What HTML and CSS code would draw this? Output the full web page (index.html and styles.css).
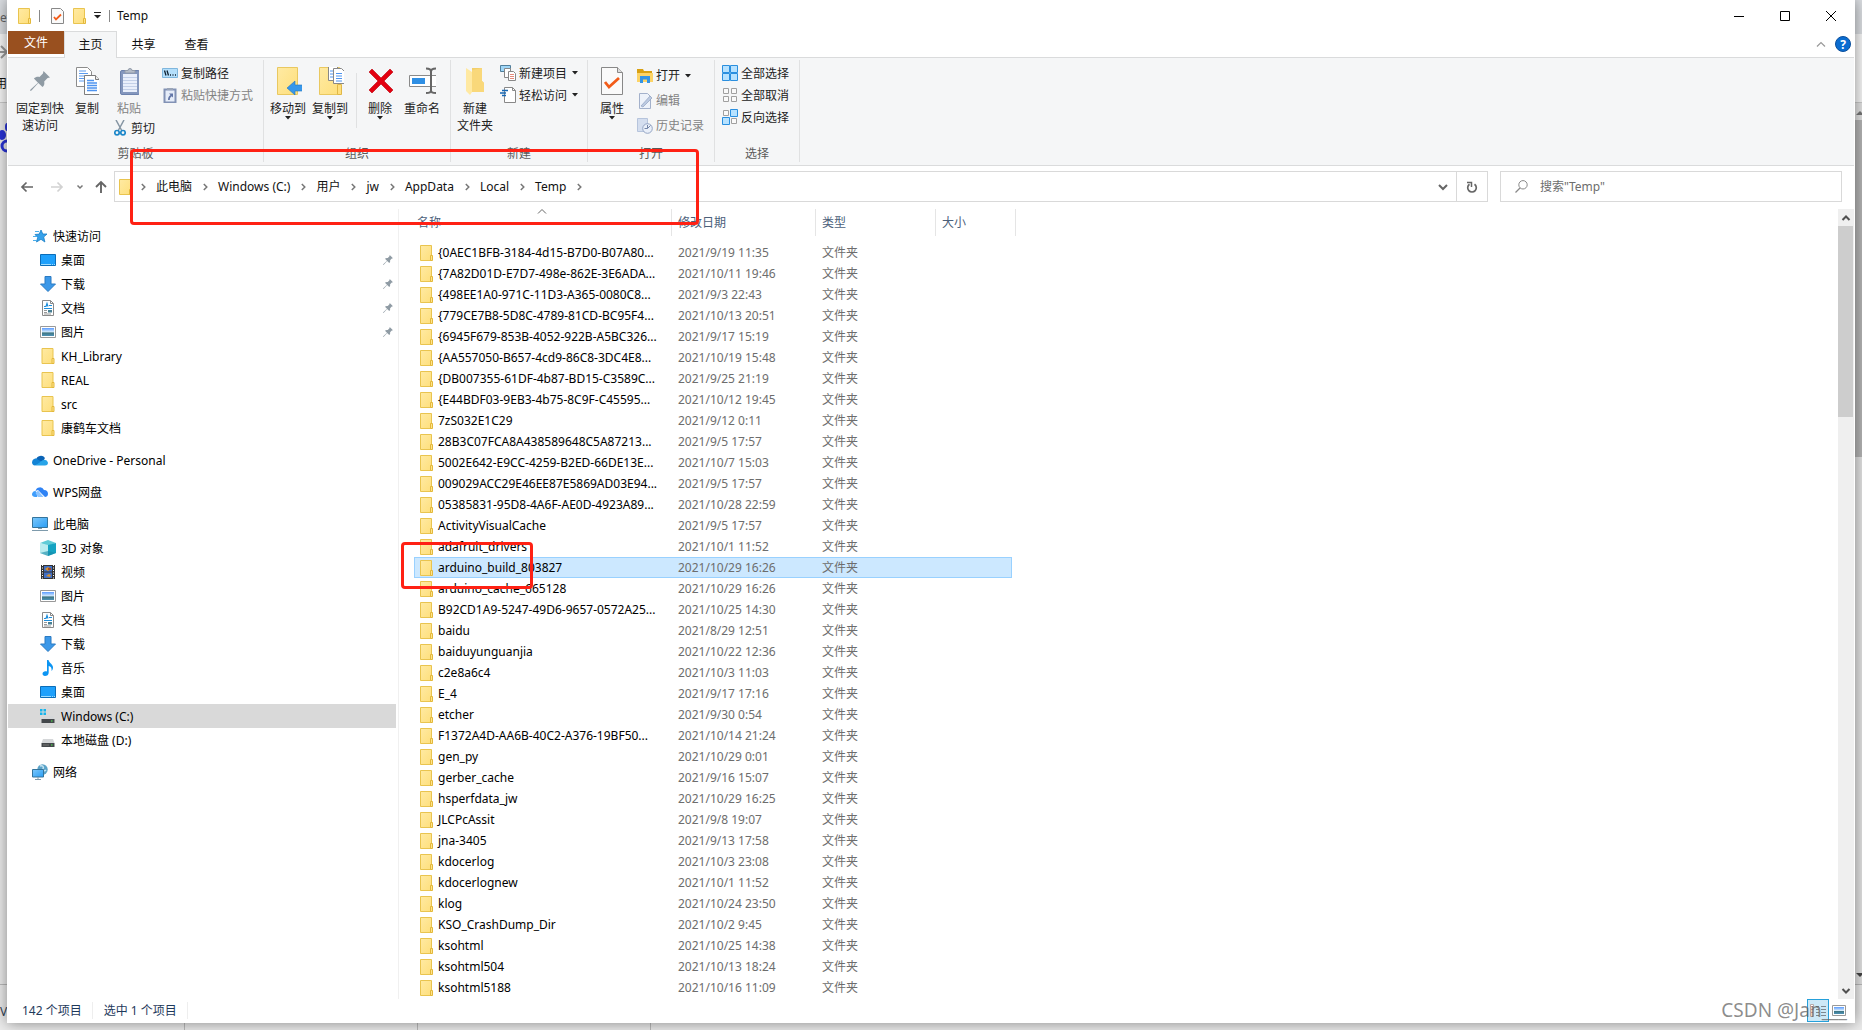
FILE: index.html
```html
<!DOCTYPE html>
<html lang="zh-CN">
<head>
<meta charset="utf-8">
<title>Temp</title>
<link rel="stylesheet" href="styles.css">
</head>
<body>
<svg class="defs" aria-hidden="true">
  <defs>
    <linearGradient id="gy" x1="0" y1="0" x2="1" y2="1"><stop offset="0" stop-color="#ffeaa3"/><stop offset="1" stop-color="#fedf7c"/></linearGradient>
    <linearGradient id="gb" x1="0" y1="0" x2="1" y2="1"><stop offset="0" stop-color="#7cc8fb"/><stop offset="1" stop-color="#2a9df4"/></linearGradient>
    <linearGradient id="gs" x1="0" y1="0" x2="0" y2="1"><stop offset="0" stop-color="#5a9bff"/><stop offset=".5" stop-color="#d8ecfb"/><stop offset=".6" stop-color="#3d7480"/><stop offset="1" stop-color="#4e93b8"/></linearGradient>
    <symbol id="folder" viewBox="0 0 13 16"><path d="M.5.5h11v15H.5z" fill="url(#gy)" stroke="#e9c44f"/><path d="M10.500 10.500h2v5h-2z" fill="#ffe48a" stroke="#e3b83c"/></symbol>
    <symbol id="pin" viewBox="0 0 20 20"><path d="M13.500 0 20 6.500l-2.400.6-3.400 3.500c.5 2.500 0 4.200-1.700 5.400L8.300 12 1.500 19.500 0 20l.5-1.500L8 11.700 3.900 7.500C5.500 5.900 7.300 5.500 9.500 5.900L12.900 2.400z" fill="#8f9ba4"/></symbol>
    <symbol id="copy" viewBox="-1 0 24 28"><path d="M.5.5h11l4 4v15h-15z" fill="#fff" stroke="#8c8c8c"/><path d="M3 4h7M3 6.500h9M3 9h9M3 11.500h9M3 14h9" stroke="#5c9cf0"/><path d="M8.500 8.500h11l4 4v15h-15z" fill="#fff" stroke="#7d7d7d"/><path d="M19.500 8.500v4h4" fill="#eee" stroke="#7d7d7d"/><path d="M11 13.500h7M11 16h10M11 18.500h10M11 21h10M11 23.500h10" stroke="#4e94f0" stroke-width="1.500"/></symbol>
    <symbol id="paste" viewBox="-1 0 20 28"><rect x=".5" y="3.500" width="19" height="24" rx="1.500" fill="#8497bd" stroke="#6d82ad"/><path d="M3 7h14v18H3z" fill="#e9effb"/><path d="M3 10.500h14M3 13.500h14M3 16.500h14M3 19.500h14M3 22.500h14" stroke="#c3d0e8"/><path d="M5 6V3.500h3a2 2 0 0 1 4 0h3V6z" fill="#b5bdc9" stroke="#929ba9"/></symbol>
    <symbol id="scissors" viewBox="0 0 12 16"><path d="M2 0 8 11M10 0 4 11" stroke="#8595a3" stroke-width="1.500"/><circle cx="3" cy="12.700" r="2.200" fill="none" stroke="#1d87c9" stroke-width="1.700"/><circle cx="9" cy="12.700" r="2.200" fill="none" stroke="#1d87c9" stroke-width="1.700"/></symbol>
    <symbol id="path" viewBox="0 0 16 16"><path d="M.5 3.500h15v9H.5z" fill="#b4dffb" stroke="#7fb6dd"/><path d="m2.500 5.500 1.500 5M5 5.500l1.500 5M8 10h1M10.500 10h1M13 10h1" stroke="#123" stroke-width="1.300"/></symbol>
    <symbol id="shortcut" viewBox="0 0 16 16"><path d="M2.500 2.500h11v13h-11z" fill="#e6edf9" stroke="#8292b5" stroke-width="2"/><path d="M5 3V1h6v2z" fill="#9aa5b8"/><path d="M6 13c0-2.500.5-3.500 2.500-5L7 6.500h4v4L9.700 9.200C8 10.500 7.800 11.500 7.800 13z" fill="#6276a8"/></symbol>
    <symbol id="moveto" viewBox="-2 0 28 28"><path d="M1.500.5h20v27h-20z" fill="url(#gy)" stroke="#e9c860"/><path d="m11 21 8-7v4h8v6h-8v4z" fill="#3797ea" stroke="#2476bd" stroke-width=".6"/></symbol>
    <symbol id="copyto" viewBox="-2 2 28 28"><path d="M1.500 2.500h20v27h-20z" fill="url(#gy)" stroke="#e9c860"/><path d="M19.500 19.500h4v10h-4z" fill="#ffdf7d" stroke="#e0b848"/><path d="M10.500.5h7l3 3v12h-10z" fill="#fff" stroke="#888"/><path d="M12 6h6M12 9h6M12 12h6" stroke="#4e94f0"/><path d="M15.500 3.500h8l3 3v12h-11z" fill="#fff" stroke="#888"/><path d="M18 8.500h6M18 11h6M18 13.500h6M18 16h6" stroke="#4e94f0"/></symbol>
    <symbol id="delete" viewBox="-1 0 26 28"><path d="m1 5 3-3 9 9 9-9 3 3-9 9 9 9-3 3-9-9-9 9-3-3 9-9z" fill="#e3000f" stroke="#b8000a" stroke-width=".6"/></symbol>
    <symbol id="rename" viewBox="-1 0 28 28"><path d="M.5 8.500h27v11H.5z" fill="#fff" stroke="#8a8a8a"/><path d="M3 11h13v6H3z" fill="#2f8fe4"/><path d="M17 1.500c3 0 5 .5 5 3v19c0 2-2 2.500-5 2.500M27 1.500c-3 0-5 .5-5 3v19c0 2 2 2.500 5 2.500" fill="none" stroke="#666" stroke-width="2"/></symbol>
    <symbol id="newfolder" viewBox="0 0 20 28"><path d="M7 1h10v13l2 2v9H7z" fill="#f3cf6a"/><path d="m1 1 6 4v20l-2 3-4-4z" fill="#ffe9a2"/><path d="M7 3 17 1v13l2 2v9H7z" fill="#f9d87a"/></symbol>
    <symbol id="newitem" viewBox="0 0 16 16"><path d="M.5.500h10v6H.5z" fill="#9fd6f7" stroke="#507f9c"/><path d="M4.500 3.500h6v9h-6z" fill="#fff" stroke="#888"/><path d="M8.500 6.500h5l2 2v7h-7z" fill="#fff" stroke="#888"/><path d="M10 9.500h4M10 11.500h4M10 13.500h4" stroke="#e58a7c"/></symbol>
    <symbol id="easy" viewBox="0 0 16 16"><path d="M4.500.5h8l3 3v12h-11z" fill="#fff" stroke="#888"/><path d="M12.500.5v3h3" fill="none" stroke="#888"/><path d="M2 3.500h6M0 6h6M2 8.500h4" stroke="#1767b3" stroke-width="1.400"/></symbol>
    <symbol id="props" viewBox="0 0 22 28"><path d="M.5.5h16l5 5v22H.5z" fill="#fafafa" stroke="#888"/><path d="M16.500.5v5h5" fill="#ddd" stroke="#888"/><path d="m4 15 4 5 10-9" fill="none" stroke="#f25c19" stroke-width="2.800"/></symbol>
    <symbol id="open" viewBox="0 0 16 16"><path d="M0 1h6l1 2h8v11H0z" fill="#d9a113"/><path d="M0 5h16v9H0z" fill="#fcd467"/><path d="M3 15V8h10v7h-3v-3.500H6V15z" fill="#3394e6"/></symbol>
    <symbol id="edit" viewBox="0 0 16 16"><path d="M2.500.5h8l3 3v12h-11z" fill="#edf2fa" stroke="#a3b1cb"/><path d="m4 13 9-10 2 2-9 9z" fill="#bccae1" stroke="#91a2c1" stroke-width=".7"/></symbol>
    <symbol id="history" viewBox="0 0 16 16"><path d="M.5.500h10v13H.5z" fill="#d4deef" stroke="#b6c4dc"/><circle cx="10.500" cy="10.500" r="4.800" fill="#e9eff9" stroke="#94a5c4"/><path d="M10.500 7v3.500H7.500M10.500 10.500l3-3" fill="none" stroke="#7486a8"/></symbol>
    <symbol id="selall" viewBox="0 0 16 16"><path d="M.5.500h7v7h-7zM8.500.5h7v7h-7zM.5 8.500h7v7h-7zM8.500 8.500h7v7h-7z" fill="#b7e2ff" stroke="#2a8fdf"/></symbol>
    <symbol id="selnone" viewBox="0 0 16 16"><path d="M1.500 1.500h5v5h-5zM9.500 1.500h5v5h-5zM1.500 9.500h5v5h-5zM9.500 9.500h5v5h-5z" fill="#fafafa" stroke="#a0a0a0"/></symbol>
    <symbol id="selinv" viewBox="0 0 16 16"><path d="M1.500 1.500h5v5h-5zM9.500 9.500h5v5h-5z" fill="#fafafa" stroke="#a0a0a0"/><path d="M8.500.5h7v7h-7zM.5 8.500h7v7h-7z" fill="#b7e2ff" stroke="#2a8fdf"/></symbol>
    <symbol id="tri" viewBox="0 0 6 4"><path d="M0 0h6L3 3.500z" fill="#222"/></symbol>
    <symbol id="chev" viewBox="0 0 5 8"><path d="m.8 1 3 3-3 3" fill="none" stroke="#777" stroke-width="1.500"/></symbol>
    <symbol id="star" viewBox="0 0 16 16"><path d="m9 2 1.800 4H15l-3.300 3 1.200 5L9 11.300 4.500 14l1.200-4.500L3 6.500l4.200-.4z" fill="#35a1ea" stroke="#1b7fc6" stroke-width=".8"/><path d="M3 3.500h4M1 8.500h4M1 12.500h4" stroke="#4daeea"/></symbol>
    <symbol id="desktop" viewBox="0 0 16 16"><path d="M.5 2.500h15v11H.5z" fill="#1ea0fb" stroke="#0b6db8"/><path d="M1 12.500h10M12 12.500h1M14 12.500h1" stroke="#9cdcff"/></symbol>
    <symbol id="down" viewBox="0 0 16 16"><path d="M5 .5h6v7.500h4.500L8 15.500.5 8H5z" fill="#3c98e8" stroke="#2b7ac2"/></symbol>
    <symbol id="doc" viewBox="0 0 16 16"><path d="M2.500.500h8l3 3v12h-11z" fill="#fff" stroke="#8a8a8a"/><path d="M10.500.5v3h3" fill="none" stroke="#8a8a8a"/><path d="M4 6.500h2l1-3 1 3M9 5.500h3M4 8.500h8" fill="none" stroke="#1f8fdc" stroke-width="1.200"/><path d="M4 10.500h3M4 12.500h3M4 14h7" stroke="#999"/><path d="M8 10h4v2.500H8z" fill="#467f94"/></symbol>
    <symbol id="pic" viewBox="0 0 16 16"><path d="M.5 2.500h15v11H.5z" fill="#fff" stroke="#999"/><path d="M2 4h12v8H2z" fill="url(#gs)"/></symbol>
    <symbol id="onedrive" viewBox="0 0 16 16"><path d="M4 8a5 5 0 0 1 9-2l-3 5z" fill="#0a63b6"/><path d="M3.500 13A3.500 3.500 0 0 1 4 6.400L12 11z" fill="#1384d6"/><path d="M3 13.500 11 8a4 4 0 0 1 5 2.500 3 3 0 0 1-3 3z" fill="#28a4e8"/><path d="M0 10.500C0 8 2 6.500 4 6.500l4 3.500-5 3.500c-2 0-3-1.500-3-3z" fill="#1384d6"/></symbol>
    <symbol id="wps" viewBox="0 0 16 16"><path d="M3.500 7a4.500 4.500 0 0 1 8.500-1c3 0 4 2 4 4s-1.500 3-3 3L6 6z" fill="#2f83f5"/><path d="M3.500 7C1 7 0 9 0 10.300 0 12 1.500 13 3 13h2l1-3z" fill="#3f9dfb"/><path d="M6 6.500 11.500 13H6L3.500 9z" fill="#8cc4ff"/></symbol>
    <symbol id="pc" viewBox="0 0 16 16"><path d="M.5 1.500h15v10H.5z" fill="url(#gb)" stroke="#34749c"/><path d="M6 12.500h4M0 14.500h16" stroke="#7e9bac"/></symbol>
    <symbol id="cube" viewBox="0 0 16 16"><path d="m0 3 8-3 8 3-8 3z" fill="#5fcbd6"/><path d="m0 3 8 2v11l-8-3z" fill="#b9ecef"/><path d="m16 3-8 2v11l8-3z" fill="#15a3c2"/><path d="m8 11 8 2-8 3-8-3z" fill="#168aa7" opacity=".6"/></symbol>
    <symbol id="video" viewBox="0 0 16 16"><path d="M1 1h14v14H1z" fill="#333"/><path d="M2.500 1v14M13.500 1v14" stroke="#fff" stroke-dasharray="1 1.500"/><path d="M4 2h8v5.500H4zM4 8.500h8V14H4z" fill="#406fc4"/><path d="m5 5 3-2 3 2-3 2zM6 12l3-2 2 1-1 2z" fill="#d8912b"/><path d="M8 4h3v2H8z" fill="#a34a22"/></symbol>
    <symbol id="music" viewBox="0 0 16 16"><path d="M7 0h1.500c.5 3 5 4.500 4.500 8-.2 1.500-1 2.500-1.500 3 .6-3-.8-4.500-2.800-5v6.500C8.700 15 7 16 5 16c-3 0-3.500-4 0-4.700.8-.1 1.500 0 2 .2z" fill="#0b95f3"/></symbol>
    <symbol id="disk" viewBox="0 0 16 16"><path d="m3 7-1.500 4h13L13 7z" fill="#d5d7d9"/><path d="M1.500 11h13v4h-13z" fill="#44484b"/><path d="M3 13h6" stroke="#777"/><path d="M11 12.500h1.500v1H11z" fill="#4cf04c"/></symbol>
    <symbol id="win" viewBox="0 0 16 16"><path d="m4 8-2.500 4h13L13 8z" fill="#d5d7d9"/><path d="M1.500 11h13v4h-13z" fill="#44484b"/><path d="M11 12.500h1.500v1H11z" fill="#4cf04c"/><path d="M0 1h2.500v2.500H0zM3.500 1H6v2.500H3.500zM0 4.500h2.500V7H0zM3.500 4.500H6V7H3.500z" fill="#16b4ec"/></symbol>
    <symbol id="net" viewBox="0 0 16 16"><circle cx="10.500" cy="5.500" r="5.200" fill="#5ba3c8"/><path d="M8 2c3-1 4 1 3 3s2 2 3 1" fill="none" stroke="#c5e4f2" stroke-width="1.500"/><path d="M.5 5.500h11v7.500H.5z" fill="url(#gb)" stroke="#34749c"/><path d="M3 15.500h6M6 13v2" stroke="#7e9bac"/></symbol>
  </defs>
</svg>

<div class="behind behind-left" aria-hidden="true">
  <div class="strip-tab">et</div>
  <div class="strip-bar"><svg width="7" height="14" viewBox="0 0 7 14"><path d="M0 7h6M1 1l6 6-6 6" fill="none" stroke="#999" stroke-width="2"/></svg><span>用</span></div>
  <div class="strip-page"><svg width="7" height="32" viewBox="0 0 7 32"><ellipse cx="2" cy="12" rx="4" ry="5" fill="#2a34d8"/><ellipse cx="7" cy="4" rx="2" ry="4" fill="#2a34d8"/><circle cx="7" cy="23" r="5" fill="none" stroke="#2a34d8" stroke-width="3"/></svg></div>
  <div class="strip-foot">V</div>
</div>
<div class="behind behind-right" aria-hidden="true">
  <div class="strip-tab"></div>
  <div class="strip-bar"></div>
  <div class="strip-scroll">
    <svg width="6" height="4" viewBox="0 0 6 4"><path d="M0 4 4 0l4 4z" fill="#777"/></svg>
    <i></i>
    <svg class="end" width="6" height="4" viewBox="0 0 6 4"><path d="M0 0h8L4 4z" fill="#444"/></svg>
  </div>
  <div class="strip-foot"></div>
</div>
<div class="behind behind-bottom" aria-hidden="true"><i></i><i></i><i></i></div>

<div class="window">
  <header class="titlebar">
    <svg width="13" height="16"><use href="#folder"/></svg>
    <i class="tick"></i>
    <button class="quick quick-props" aria-label="属性"><svg width="13" height="16" viewBox="0 0 13 16"><path d="M.5.500h9l3 3v12H.5z" fill="#fafafa" stroke="#888"/><path d="m3 9 2 2.500 5-5" fill="none" stroke="#f25c19" stroke-width="1.800"/></svg></button>
    <button class="quick" aria-label="新建文件夹"><svg width="13" height="16"><use href="#folder"/></svg></button>
    <button class="quick quick-more" aria-label="自定义快速访问工具栏"><svg width="7" height="7" viewBox="0 0 7 7"><path d="M0 .5h7" stroke="#222"/><path d="M0 3h7L3.500 6.500z" fill="#222"/></svg></button>
    <i class="tick"></i>
    <h1>Temp</h1>
    <div class="controls">
      <button aria-label="最小化"><svg width="10" height="10"><path d="M0 5.500h10" stroke="#000"/></svg></button>
      <button aria-label="最大化"><svg width="10" height="10"><path d="M.5.500h9v9h-9z" fill="none" stroke="#000"/></svg></button>
      <button aria-label="关闭"><svg width="10" height="10"><path d="m0 0 10 10M10 0 0 10" stroke="#000"/></svg></button>
    </div>
  </header>

  <div class="tabs">
    <button class="tab file">文件</button>
    <button class="tab active">主页</button>
    <button class="tab">共享</button>
    <button class="tab">查看</button>
    <div class="tab-tools">
      <button aria-label="最小化功能区"><svg width="8" height="5"><path d="m0 4.500 4-4 4 4" fill="none" stroke="#999" stroke-width="1.200"/></svg></button>
      <button class="help" aria-label="帮助">?</button>
    </div>
  </div>

  <div class="ribbon">
    <section class="group g-clip">
      <div class="tools">
        <button class="big w54"><svg class="pin-big" width="20" height="20"><use href="#pin"/></svg><span>固定到快<br>速访问</span></button>
        <button class="big w40"><svg width="24" height="28"><use href="#copy"/></svg><span>复制</span></button>
        <div class="paste-col">
          <button class="big w44 off"><svg width="20" height="28"><use href="#paste"/></svg><span>粘贴</span></button>
          <button class="small"><svg width="12" height="16"><use href="#scissors"/></svg><span>剪切</span></button>
        </div>
        <div class="stack">
          <button class="small"><svg width="16" height="16"><use href="#path"/></svg><span>复制路径</span></button>
          <button class="small off"><svg width="16" height="16"><use href="#shortcut"/></svg><span>粘贴快捷方式</span></button>
        </div>
      </div>
      <h2>剪贴板</h2>
    </section>
    <section class="group g-org">
      <div class="tools">
        <button class="big w42"><svg width="28" height="28"><use href="#moveto"/></svg><span>移动到</span><svg class="tri" width="6" height="4"><use href="#tri"/></svg></button>
        <button class="big w42"><svg width="28" height="28"><use href="#copyto"/></svg><span>复制到</span><svg class="tri" width="6" height="4"><use href="#tri"/></svg></button>
        <i class="sep"></i>
        <button class="big w42"><svg width="26" height="28"><use href="#delete"/></svg><span>删除</span><svg class="tri" width="6" height="4"><use href="#tri"/></svg></button>
        <button class="big w42"><svg width="28" height="28"><use href="#rename"/></svg><span>重命名</span></button>
      </div>
      <h2>组织</h2>
    </section>
    <section class="group g-new">
      <div class="tools">
        <button class="big w48"><svg width="20" height="28"><use href="#newfolder"/></svg><span>新建<br>文件夹</span></button>
        <div class="stack">
          <button class="small"><svg width="16" height="16"><use href="#newitem"/></svg><span>新建项目</span><svg class="side-tri" width="6" height="4"><use href="#tri"/></svg></button>
          <button class="small"><svg width="16" height="16"><use href="#easy"/></svg><span>轻松访问</span><svg class="side-tri" width="6" height="4"><use href="#tri"/></svg></button>
        </div>
      </div>
      <h2>新建</h2>
    </section>
    <section class="group g-open">
      <div class="tools">
        <button class="big w48"><svg width="22" height="28"><use href="#props"/></svg><span>属性</span><svg class="tri" width="6" height="4"><use href="#tri"/></svg></button>
        <div class="stack loose">
          <button class="small"><svg width="16" height="16"><use href="#open"/></svg><span>打开</span><svg class="side-tri" width="6" height="4"><use href="#tri"/></svg></button>
          <button class="small off"><svg width="16" height="16"><use href="#edit"/></svg><span>编辑</span></button>
          <button class="small off"><svg width="16" height="16"><use href="#history"/></svg><span>历史记录</span></button>
        </div>
      </div>
      <h2>打开</h2>
    </section>
    <section class="group g-select">
      <div class="tools">
        <div class="stack">
          <button class="small"><svg width="16" height="16"><use href="#selall"/></svg><span>全部选择</span></button>
          <button class="small"><svg width="16" height="16"><use href="#selnone"/></svg><span>全部取消</span></button>
          <button class="small"><svg width="16" height="16"><use href="#selinv"/></svg><span>反向选择</span></button>
        </div>
      </div>
      <h2>选择</h2>
    </section>
  </div>

  <div class="navbar">
    <div class="arrows">
      <button aria-label="后退"><svg width="12" height="10"><path d="M12 5H1M5.500.5 1 5l4.500 4.500" fill="none" stroke="#666" stroke-width="1.700"/></svg></button>
      <button aria-label="前进"><svg width="12" height="10"><path d="M0 5h11M6.500.5 11 5 6.500 9.500" fill="none" stroke="#d2d2d2" stroke-width="1.700"/></svg></button>
      <button class="recent" aria-label="最近浏览的位置"><svg width="6" height="4"><path d="m.5.500 2.500 2.500 2.500-2.500" fill="none" stroke="#777" stroke-width="1.500"/></svg></button>
      <button class="up" aria-label="上移"><svg width="12" height="12"><path d="M6 12V1M1 6l5-5 5 5" fill="none" stroke="#666" stroke-width="1.900"/></svg></button>
    </div>
    <div class="address">
      <svg width="13" height="16"><use href="#folder"/></svg>
      <nav class="crumbs" aria-label="路径">
        <svg><use href="#chev"/></svg><a href="#">此电脑</a>
        <svg><use href="#chev"/></svg><a href="#">Windows (C:)</a>
        <svg><use href="#chev"/></svg><a href="#">用户</a>
        <svg><use href="#chev"/></svg><a href="#">jw</a>
        <svg><use href="#chev"/></svg><a href="#">AppData</a>
        <svg><use href="#chev"/></svg><a href="#">Local</a>
        <svg><use href="#chev"/></svg><a href="#">Temp</a>
        <svg><use href="#chev"/></svg>
      </nav>
      <button class="drop" aria-label="以前的位置"><svg width="10" height="6"><path d="m1 1 4 4 4-4" fill="none" stroke="#666" stroke-width="2"/></svg></button>
      <button class="refresh" aria-label="刷新"><svg width="12" height="12" viewBox="0 0 12 12"><path d="M8.500 3.200A4.300 4.300 0 1 1 3.500 3.200" fill="none" stroke="#666" stroke-width="1.700"/><path d="M1 1.500h4.500V6" fill="none" stroke="#666" stroke-width="1.500"/></svg></button>
    </div>
    <label class="search">
      <svg width="13" height="13"><circle cx="8" cy="4.800" r="4.200" fill="none" stroke="#888"/><path d="M5 8 .5 12.500" stroke="#888" stroke-width="1.200"/></svg>
      <input type="text" placeholder="搜索&quot;Temp&quot;" aria-label="搜索">
    </label>
  </div>

  <div class="content">
    <nav class="tree" aria-label="导航窗格">
      <ul>
        <li><a class="root" href="#"><svg><use href="#star"/></svg>快速访问</a></li>
        <li><a href="#"><svg><use href="#desktop"/></svg>桌面<svg class="pinned"><use href="#pin"/></svg></a></li>
        <li><a href="#"><svg><use href="#down"/></svg>下载<svg class="pinned"><use href="#pin"/></svg></a></li>
        <li><a href="#"><svg><use href="#doc"/></svg>文档<svg class="pinned"><use href="#pin"/></svg></a></li>
        <li><a href="#"><svg><use href="#pic"/></svg>图片<svg class="pinned"><use href="#pin"/></svg></a></li>
        <li><a href="#"><svg><use href="#folder"/></svg>KH_Library</a></li>
        <li><a href="#"><svg><use href="#folder"/></svg>REAL</a></li>
        <li><a href="#"><svg><use href="#folder"/></svg>src</a></li>
        <li><a href="#"><svg><use href="#folder"/></svg>康鹤车文档</a></li>
      </ul>
      <ul><li><a class="root" href="#"><svg><use href="#onedrive"/></svg>OneDrive - Personal</a></li></ul>
      <ul><li><a class="root" href="#"><svg><use href="#wps"/></svg>WPS网盘</a></li></ul>
      <ul>
        <li><a class="root" href="#"><svg><use href="#pc"/></svg>此电脑</a></li>
        <li><a href="#"><svg><use href="#cube"/></svg>3D 对象</a></li>
        <li><a href="#"><svg><use href="#video"/></svg>视频</a></li>
        <li><a href="#"><svg><use href="#pic"/></svg>图片</a></li>
        <li><a href="#"><svg><use href="#doc"/></svg>文档</a></li>
        <li><a href="#"><svg><use href="#down"/></svg>下载</a></li>
        <li><a href="#"><svg><use href="#music"/></svg>音乐</a></li>
        <li><a href="#"><svg><use href="#desktop"/></svg>桌面</a></li>
        <li><a class="current" href="#"><svg><use href="#win"/></svg>Windows (C:)</a></li>
        <li><a href="#"><svg><use href="#disk"/></svg>本地磁盘 (D:)</a></li>
      </ul>
      <ul><li><a class="root" href="#"><svg><use href="#net"/></svg>网络</a></li></ul>
    </nav>

    <main class="files">
      <table>
        <colgroup><col class="c-name"><col class="c-date"><col class="c-type"><col class="c-size"></colgroup>
        <thead><tr>
          <th><div>名称<svg class="sort" width="10" height="5"><path d="m1 4.500 4-4 4 4" fill="none" stroke="#666"/></svg></div></th>
          <th><div>修改日期</div></th><th><div>类型</div></th><th><div class="last">大小</div></th>
        </tr></thead>
        <tbody>
          <tr><td><svg><use href="#folder"/></svg>{0AEC1BFB-3184-4d15-B7D0-B07A80...</td><td>2021/9/19 11:35</td><td>文件夹</td><td></td></tr>
          <tr><td><svg><use href="#folder"/></svg>{7A82D01D-E7D7-498e-862E-3E6ADA...</td><td>2021/10/11 19:46</td><td>文件夹</td><td></td></tr>
          <tr><td><svg><use href="#folder"/></svg>{498EE1A0-971C-11D3-A365-0080C8...</td><td>2021/9/3 22:43</td><td>文件夹</td><td></td></tr>
          <tr><td><svg><use href="#folder"/></svg>{779CE7B8-5D8C-4789-81CD-BC95F4...</td><td>2021/10/13 20:51</td><td>文件夹</td><td></td></tr>
          <tr><td><svg><use href="#folder"/></svg>{6945F679-853B-4052-922B-A5BC326...</td><td>2021/9/17 15:19</td><td>文件夹</td><td></td></tr>
          <tr><td><svg><use href="#folder"/></svg>{AA557050-B657-4cd9-86C8-3DC4E8...</td><td>2021/10/19 15:48</td><td>文件夹</td><td></td></tr>
          <tr><td><svg><use href="#folder"/></svg>{DB007355-61DF-4b87-BD15-C3589C...</td><td>2021/9/25 21:19</td><td>文件夹</td><td></td></tr>
          <tr><td><svg><use href="#folder"/></svg>{E44BDF03-9EB3-4b75-8C9F-C45595...</td><td>2021/10/12 19:45</td><td>文件夹</td><td></td></tr>
          <tr><td><svg><use href="#folder"/></svg>7zS032E1C29</td><td>2021/9/12 0:11</td><td>文件夹</td><td></td></tr>
          <tr><td><svg><use href="#folder"/></svg>28B3C07FCA8A438589648C5A87213...</td><td>2021/9/5 17:57</td><td>文件夹</td><td></td></tr>
          <tr><td><svg><use href="#folder"/></svg>5002E642-E9CC-4259-B2ED-66DE13E...</td><td>2021/10/7 15:03</td><td>文件夹</td><td></td></tr>
          <tr><td><svg><use href="#folder"/></svg>009029ACC29E46EE87E5869AD03E94...</td><td>2021/9/5 17:57</td><td>文件夹</td><td></td></tr>
          <tr><td><svg><use href="#folder"/></svg>05385831-95D8-4A6F-AE0D-4923A89...</td><td>2021/10/28 22:59</td><td>文件夹</td><td></td></tr>
          <tr><td><svg><use href="#folder"/></svg>ActivityVisualCache</td><td>2021/9/5 17:57</td><td>文件夹</td><td></td></tr>
          <tr><td><svg><use href="#folder"/></svg>adafruit_drivers</td><td>2021/10/1 11:52</td><td>文件夹</td><td></td></tr>
          <tr class="selected"><td><svg><use href="#folder"/></svg>arduino_build_803827</td><td>2021/10/29 16:26</td><td>文件夹</td><td></td></tr>
          <tr><td><svg><use href="#folder"/></svg>arduino_cache_665128</td><td>2021/10/29 16:26</td><td>文件夹</td><td></td></tr>
          <tr><td><svg><use href="#folder"/></svg>B92CD1A9-5247-49D6-9657-0572A25...</td><td>2021/10/25 14:30</td><td>文件夹</td><td></td></tr>
          <tr><td><svg><use href="#folder"/></svg>baidu</td><td>2021/8/29 12:51</td><td>文件夹</td><td></td></tr>
          <tr><td><svg><use href="#folder"/></svg>baiduyunguanjia</td><td>2021/10/22 12:36</td><td>文件夹</td><td></td></tr>
          <tr><td><svg><use href="#folder"/></svg>c2e8a6c4</td><td>2021/10/3 11:03</td><td>文件夹</td><td></td></tr>
          <tr><td><svg><use href="#folder"/></svg>E_4</td><td>2021/9/17 17:16</td><td>文件夹</td><td></td></tr>
          <tr><td><svg><use href="#folder"/></svg>etcher</td><td>2021/9/30 0:54</td><td>文件夹</td><td></td></tr>
          <tr><td><svg><use href="#folder"/></svg>F1372A4D-AA6B-40C2-A376-19BF50...</td><td>2021/10/14 21:24</td><td>文件夹</td><td></td></tr>
          <tr><td><svg><use href="#folder"/></svg>gen_py</td><td>2021/10/29 0:01</td><td>文件夹</td><td></td></tr>
          <tr><td><svg><use href="#folder"/></svg>gerber_cache</td><td>2021/9/16 15:07</td><td>文件夹</td><td></td></tr>
          <tr><td><svg><use href="#folder"/></svg>hsperfdata_jw</td><td>2021/10/29 16:25</td><td>文件夹</td><td></td></tr>
          <tr><td><svg><use href="#folder"/></svg>JLCPcAssit</td><td>2021/9/8 19:07</td><td>文件夹</td><td></td></tr>
          <tr><td><svg><use href="#folder"/></svg>jna-3405</td><td>2021/9/13 17:58</td><td>文件夹</td><td></td></tr>
          <tr><td><svg><use href="#folder"/></svg>kdocerlog</td><td>2021/10/3 23:08</td><td>文件夹</td><td></td></tr>
          <tr><td><svg><use href="#folder"/></svg>kdocerlognew</td><td>2021/10/1 11:52</td><td>文件夹</td><td></td></tr>
          <tr><td><svg><use href="#folder"/></svg>klog</td><td>2021/10/24 23:50</td><td>文件夹</td><td></td></tr>
          <tr><td><svg><use href="#folder"/></svg>KSO_CrashDump_Dir</td><td>2021/10/2 9:45</td><td>文件夹</td><td></td></tr>
          <tr><td><svg><use href="#folder"/></svg>ksohtml</td><td>2021/10/25 14:38</td><td>文件夹</td><td></td></tr>
          <tr><td><svg><use href="#folder"/></svg>ksohtml504</td><td>2021/10/13 18:24</td><td>文件夹</td><td></td></tr>
          <tr><td><svg><use href="#folder"/></svg>ksohtml5188</td><td>2021/10/16 11:09</td><td>文件夹</td><td></td></tr>
        </tbody>
      </table>
    </main>

    <div class="scrollbar" aria-hidden="true">
      <svg width="8" height="6"><path d="m.5 5 3.500-3.500L7.500 5" fill="none" stroke="#505050" stroke-width="2"/></svg>
      <i></i>
      <svg width="8" height="6"><path d="m.5 1 3.500 3.500L7.500 1" fill="none" stroke="#505050" stroke-width="2"/></svg>
    </div>
  </div>

  <footer class="status">
    <span>142 个项目</span>
    <span>选中 1 个项目</span>
    <div class="views">
      <button class="on" aria-label="详细信息"><svg width="16" height="13"><path d="M.5.500h3v12h-3z" fill="#fff" stroke="#b5a8a8"/><path d="M1.500 2.500h1M1.500 5.500h1M1.500 8.500h1" stroke="#b04040"/><path d="M6 2.500h3M11 2.500h5M6 5.500h3M11 5.500h5M6 8.500h3M11 8.500h5M6 11.500h3M11 11.500h5" stroke="#7d8890"/></svg></button>
      <button aria-label="大缩略图"><svg width="14" height="12" viewBox="0 0 14 12"><path d="M.5.500h13v10H.5z" fill="#fff" stroke="#999"/><path d="M2 2h10v7H2z" fill="url(#gs)"/></svg></button>
    </div>
  </footer>
</div>

<div class="mark mark-path"></div>
<div class="mark mark-row"></div>
<div class="watermark">CSDN @Jan___</div>
</body>
</html>
```
FILE: styles.css
```css
* { box-sizing: border-box; }

body {
  margin: 0;
  height: 100vh;
  overflow: hidden;
  background: #ececec;
  color: #111;
  font: 12px/17px "Noto Sans", "Noto Sans CJK SC", sans-serif;
}

.defs { position: absolute; width: 0; height: 0; }

button {
  margin: 0;
  padding: 0;
  border: 0;
  background: none;
  color: inherit;
  font: inherit;
  white-space: nowrap;
}

a { color: inherit; text-decoration: none; }
svg { flex: none; overflow: visible; }
h1, h2 { margin: 0; font: inherit; }

/* Browser window that lies behind the Explorer window */
.behind { position: absolute; overflow: hidden; }
.behind-left, .behind-right {
  top: 0;
  bottom: 0;
  width: 7px;
  display: flex;
  flex-direction: column;
}
.behind-left { left: 0; }
.behind-right { right: 0; }
.behind-bottom {
  left: 0;
  right: 0;
  bottom: 0;
  height: 7px;
  display: flex;
}
.behind-bottom i { width: 233px; border-right: 1px solid #bbb; }
.behind-bottom i:first-child { width: 185px; }
.strip-tab { height: 34px; padding-top: 9px; background: #dcdfe3; color: #666; }
.strip-bar { height: 69px; padding-top: 11px; background: #f8f8f8; border-bottom: 1px solid #ccc; }
.strip-bar svg, .strip-page svg { display: block; }
.strip-bar span { display: block; width: 12px; margin: 16px 0 0 -5px; }
.strip-page { flex: 1; padding-top: 20px; }
.strip-foot { height: 46px; padding-top: 18px; border-top: 1px solid #bbb; color: #345; }
.strip-scroll { flex: 1; display: flex; flex-direction: column; padding: 8px 0 7px 1px; background: #e4e4e4; }
.strip-scroll i { height: 337px; margin: 5px 0 0 -1px; background: #b5b5b5; }
.strip-scroll .end { margin-top: auto; }

.window {
  position: relative;
  display: flex;
  flex-direction: column;
  height: calc(100vh - 7px);
  margin: 0 7px;
  padding: 0 1px;
  background: #fff;
  box-shadow: 0 0 14px rgba(0, 0, 0, .45);
}

/* Title bar */
.titlebar { display: flex; align-items: center; height: 31px; padding-left: 10px; }
.tick { width: 1px; height: 12px; background: #888; }
.titlebar > svg { margin-right: 8px; }
.quick { height: 16px; margin-right: 9px; }
.quick svg { display: block; }
.quick-props { margin-left: 11px; }
.quick-more { display: flex; align-items: center; margin: 0 8px 0 -1px; }
.titlebar h1 { margin-left: 7px; line-height: 31px; }
.controls { display: flex; margin-left: auto; height: 30px; }
.controls button { display: flex; align-items: center; justify-content: center; width: 46px; }

/* Ribbon tabs */
.tabs { display: flex; height: 27px; border-bottom: 1px solid #dadbdc; }
.tab { width: 53px; height: 26px; }
.tab.file { width: 56px; height: 23px; background: #99501f; color: #fff; }
.tab.active { height: 27px; padding-bottom: 2px; background: #f5f6f7; border: 1px solid #dadbdc; border-bottom: 0; }
.tab-tools { display: flex; align-items: center; gap: 10px; margin-left: auto; padding-right: 3px; }
.tab-tools button { display: flex; align-items: center; justify-content: center; }
.tab-tools .help {
  width: 16px;
  height: 16px;
  border: 1px solid #0a4f9c;
  border-radius: 50%;
  background: #0a6cd0;
  color: #fff;
  font-weight: 700;
}

/* Ribbon */
.ribbon { display: flex; height: 108px; background: #f5f6f7; border-bottom: 1px solid #dadbdc; color: #222; }
.group { position: relative; display: flex; flex-direction: column; padding: 0 1px 3px 0; }
.group::after { content: ""; position: absolute; top: 2px; right: 0; bottom: 3px; width: 1px; background: #e0e1e2; }
.group h2 { color: #5a5a5a; text-align: center; }
.tools { display: flex; flex: 1; }
.g-clip { width: 256px; }
.g-clip .tools { padding-left: 5px; }
.g-org { width: 187px; }
.g-org .tools { padding-left: 3px; }
.g-new { width: 137px; }
.g-open { width: 127px; }
.g-select { width: 85px; }
.g-select .tools { padding-left: 6px; }

.big { display: flex; flex-direction: column; align-items: center; padding-top: 9px; align-self: flex-start; }
.big span { margin-top: 5px; }
.big .pin-big { margin: 4px 0; }
.tri { margin-top: -1px; }
.w40 { width: 40px; }
.w42 { width: 42px; }
.w44 { width: 44px; }
.w48 { width: 48px; }
.w54 { width: 54px; }
.off { color: #838383; }
.sep { width: 1px; height: 55px; margin: 15px 2px 0 5px; background: #e0e1e2; }

.small { display: flex; align-items: center; gap: 3px; height: 22px; }
.side-tri { margin-left: 2px; }
.stack { padding: 4px 0 0 1px; }
.stack.loose { padding-top: 5px; }
.stack.loose .small { height: 25px; }
.paste-col { width: 49px; }
.paste-col .small { gap: 5px; margin-left: 7px; }
.g-clip .stack { padding-left: 6px; }

/* Navigation row */
.navbar { display: flex; height: 43px; padding: 5px 12px 7px 0; }
.arrows { display: flex; align-items: center; width: 106px; padding-left: 13px; }
.arrows button { display: flex; margin-right: 18px; }
.arrows .recent { margin: 0 12px 0 -4px; }
.arrows .up { margin: 0; }
.address { display: flex; flex: 1; align-items: center; border: 1px solid #d9d9d9; padding-left: 4px; }
.crumbs { display: flex; align-items: center; flex: 1; margin-left: -2px; }
.crumbs svg { width: 5px; height: 8px; margin: 0 10px 0 11px; }
.drop { width: 26px; height: 29px; display: flex; align-items: center; justify-content: center; }
.refresh { width: 31px; height: 29px; display: flex; align-items: center; justify-content: center; border-left: 1px solid #d9d9d9; }
.search { display: flex; align-items: center; width: 342px; margin-left: 12px; padding-left: 14px; border: 1px solid #d9d9d9; }
.search input { flex: 1; min-width: 0; margin-left: 12px; padding: 0; border: 0; outline: 0; background: none; font: inherit; }
.search input::placeholder { color: #6d6d6d; opacity: 1; }

/* Navigation pane */
.content { display: flex; flex: 1; min-height: 0; }
.tree { width: 391px; padding: 15px 2px 0 0; border-right: 1px solid #f0f0f0; }
.tree ul { margin: 0 0 8px; padding: 0; list-style: none; }
.tree a { display: flex; align-items: center; height: 24px; padding-left: 32px; color: #000; }
.tree a.root { padding-left: 24px; }
.tree a.current { background: #d9d9d9; }
.tree svg { width: 16px; height: 16px; margin-right: 5px; }
.tree .pinned { width: 10px; height: 10px; margin: 0 3px 0 auto; }

/* File list */
.files { flex: 1; min-width: 0; overflow: hidden; padding-left: 15px; }
table { width: 598px; table-layout: fixed; border-collapse: collapse; }
.c-name { width: 258px; }
.c-date { width: 144px; }
.c-type { width: 120px; }
.c-size { width: 76px; }
th { height: 33px; padding: 0; vertical-align: top; text-align: left; font-weight: 400; color: #4c607a; }
th div { position: relative; height: 27px; padding: 5px 0 0 6px; border-right: 1px solid #e5e5e5; }
th:first-child div { padding-left: 3px; }
th .last { width: 80px; }
.sort { position: absolute; top: 0; left: 48%; }
td { height: 21px; padding: 0 0 0 6px; color: #6d6d6d; white-space: nowrap; line-height: 17px; }
td:first-child { color: #000; }
td svg { width: 13px; height: 16px; margin-right: 5px; vertical-align: middle; }
.selected { background: #cce8ff; outline: 1px solid #99d1ff; outline-offset: -1px; }

.scrollbar { display: flex; flex-direction: column; align-items: center; width: 16px; padding: 6px 0 5px; background: #efefef; }
.scrollbar i { width: 15px; height: 191px; margin: 5px 1px auto 0; background: #cdcdcd; }

/* Status bar */
.status { display: flex; align-items: center; height: 24px; padding: 0 0 1px 14px; color: #1e395b; }
.status span { padding-right: 10px; margin-right: 11px; border-right: 1px solid #eee; }
.views { display: flex; gap: 3px; margin-left: auto; padding-right: 8px; }
.views button { display: flex; align-items: center; justify-content: center; height: 23px; }
.views .on { width: 22px; border: 1px solid #26a0da; background: #cce8f6; }

/* Annotations drawn over the window */
.mark { position: absolute; border: 3px solid #ff2114; border-radius: 4px; }
.mark-path { left: 130px; top: 149px; width: 569px; height: 76px; }
.mark-row { left: 401px; top: 542px; width: 132px; height: 47px; }
.watermark {
  position: absolute;
  right: 15px;
  bottom: 6px;
  color: rgba(90, 90, 90, .7);
  font-size: 19px;
  line-height: 28px;
}
```
